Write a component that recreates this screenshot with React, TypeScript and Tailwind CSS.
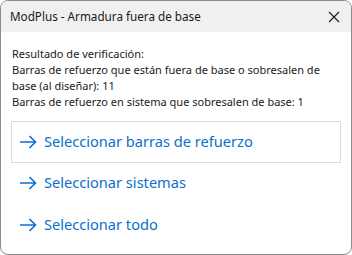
import React from 'react';

const Arrow: React.FC = () => (
  <svg width="18" height="14" viewBox="0 0 18 14" fill="none" className="shrink-0">
    <path d="M1 7H16.5M10.5 1L16.5 7L10.5 13" stroke="#0a6fcf" strokeWidth="1.6" />
  </svg>
);

const actions = ['Seleccionar barras de refuerzo', 'Seleccionar sistemas', 'Seleccionar todo'];

const App: React.FC = () => {
  return (
    <div className="w-[352px] h-[255px] bg-white font-['Noto_Sans',sans-serif]">
      <div className="w-full h-full flex flex-col border border-[#8c8c8c] rounded-lg overflow-hidden bg-white">
        <div className="h-[31px] shrink-0 bg-[#f0f0f0] flex items-center justify-between pl-[9px] pr-[10px]">
          <span className="text-[11.7px] text-[#1a1a1a]">ModPlus - Armadura fuera de base</span>
          <svg width="12" height="12" viewBox="0 0 12 12" className="mr-[1px]">
            <path d="M1 1L11 11M11 1L1 11" stroke="#1a1a1a" strokeWidth="1.1" />
          </svg>
        </div>
        <div className="flex flex-col px-[10px] pt-[14px]">
          <div className="text-[11px] leading-[16px] text-[#1a1a1a] pl-[1px]">
            <p>Resultado de verificación:</p>
            <p>Barras de refuerzo que están fuera de base o sobresalen de base (al diseñar): 11</p>
            <p>Barras de refuerzo en sistema que sobresalen de base: 1</p>
          </div>
          <div className="flex flex-col mt-[11px]">
            {actions.map((a, i) => (
              <div
                key={a}
                className={`h-[41.5px] flex items-center gap-[7px] pl-[7px] border ${i === 0 ? 'border-[#c5e0f7]' : 'border-transparent'}`}
              >
                <Arrow />
                <span className="text-[14.6px] text-[#0a6fcf]">{a}</span>
              </div>
            ))}
          </div>
        </div>
      </div>
    </div>
  );
};

export default App;
